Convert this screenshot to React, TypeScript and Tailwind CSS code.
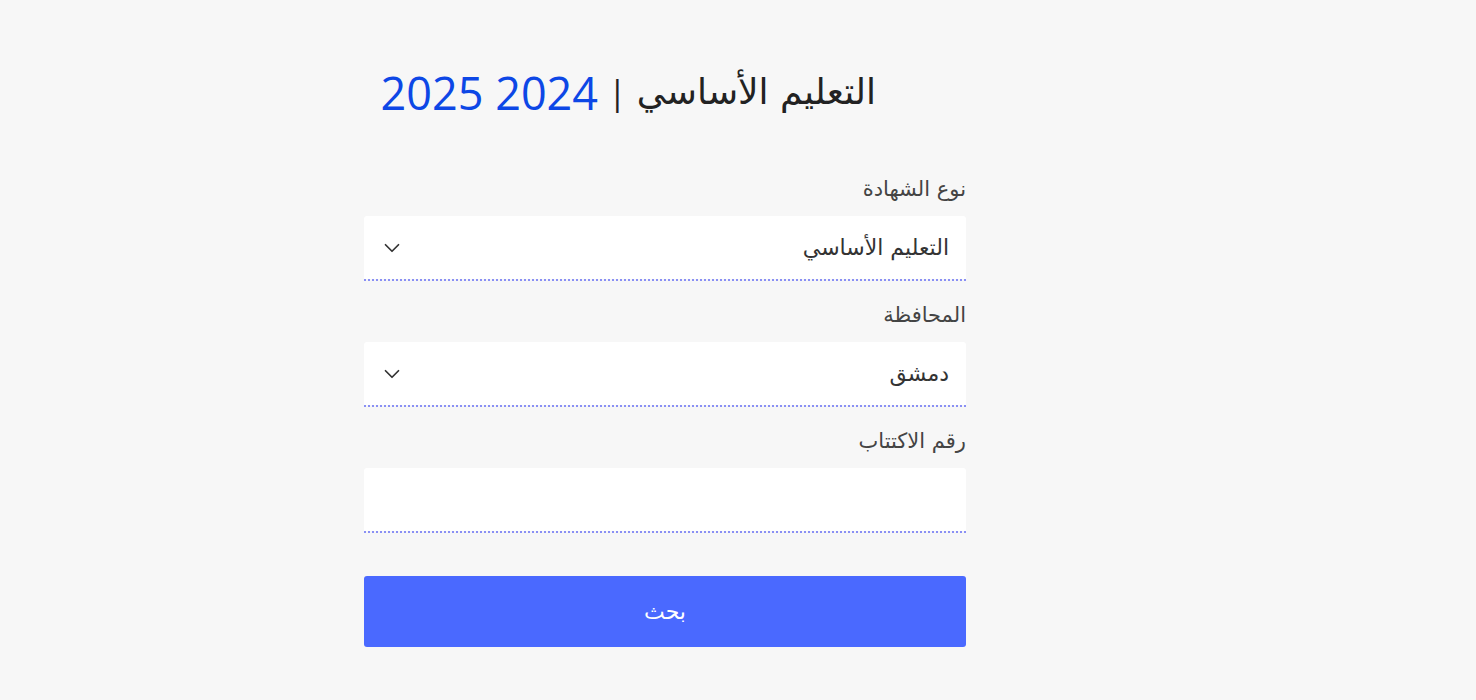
import { ChevronDown } from "lucide-react";
import React from "react";

const arabic = "font-['DejaVu_Sans','Noto_Sans',sans-serif]";

const Dots = () => (
  <div className="h-[2px] w-full bg-[repeating-linear-gradient(to_left,#8a90f4_0px,#8a90f4_2px,transparent_2px,transparent_4px)]" />
);

const Field = ({ label, children }: { label: string; children: React.ReactNode }) => {
  return (
    <div className="flex flex-col mb-[21px]">
      <label className={`h-[26px] leading-[26px] text-[21px] text-[#444] mb-[14px] ${arabic}`}>
        {label}
      </label>
      {children}
      <Dots />
    </div>
  );
};

const SelectBox = ({ value }: { value: string }) => {
  return (
    <div className="relative h-[63px] bg-white rounded-t-[3px]">
      <select
        defaultValue={value}
        className={`appearance-none w-full h-full bg-transparent pr-[17px] pl-[48px] text-[22px] text-[#333] outline-none ${arabic}`}
      >
        <option>{value}</option>
      </select>
      <ChevronDown
        size={26}
        strokeWidth={1.6}
        className="absolute left-[15px] top-1/2 -translate-y-1/2 text-[#333] pointer-events-none"
      />
    </div>
  );
};

export default function App() {
  return (
    <div className="min-h-[700px] w-full bg-[#f7f7f7] pl-[364px]">
      <div className="w-[602px] pt-[62px]" dir="rtl">
        <div className="h-[60px] flex items-center pr-[90px] gap-[10px]">
          <span className={`text-[36px] text-[#222] ${arabic}`}>التعليم الأساسي</span>
          <span className="text-[34px] text-[#222] font-['Open_Sans',sans-serif]">|</span>
          <span className="text-[45px] text-[#0d47e6] font-['Open_Sans',sans-serif] leading-none pl-[2px]">
            2024 2025
          </span>
        </div>

        <form className="mt-[54px] flex flex-col">
          <Field label="نوع الشهادة">
            <SelectBox value="التعليم الأساسي" />
          </Field>
          <Field label="المحافظة">
            <SelectBox value="دمشق" />
          </Field>
          <Field label="رقم الاكتتاب">
            <input
              type="text"
              className={`h-[63px] bg-white rounded-t-[3px] px-[17px] text-[22px] outline-none ${arabic}`}
            />
          </Field>
          <button
            type="button"
            className={`mt-[22px] h-[71px] rounded-[3px] bg-[#4a69ff] text-white text-[22px] ${arabic}`}
          >
            بحث
          </button>
        </form>
      </div>
    </div>
  );
}
